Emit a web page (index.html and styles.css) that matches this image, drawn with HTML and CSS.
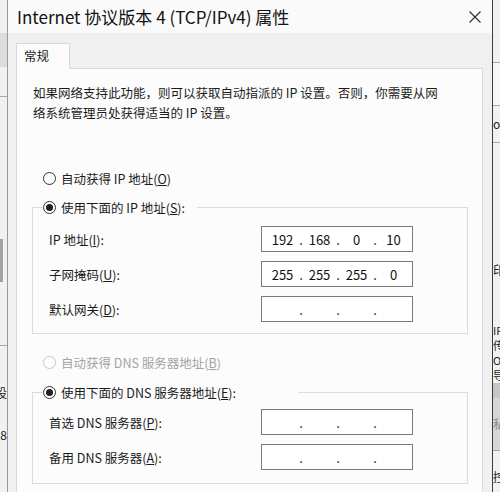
FILE: index.html
```html
<!DOCTYPE html>
<html lang="zh-CN">
<head>
    <meta charset="UTF-8">
    <meta name="viewport" content="width=device-width, initial-scale=1.0">
    <title>Internet 协议版本 4 (TCP/IPv4) 属性</title>
    <link rel="stylesheet" href="styles.css">
</head>
<body>
<div class="screen">
    <!-- window behind the dialog, left edge -->
    <div class="bg-left">
        <div class="seg" style="height:33px"></div>
        <div class="seg dark" style="height:34px"></div>
        <div class="seg line" style="height:30px"></div>
        <div class="seg" style="height:142px"></div>
        <div class="seg bar" style="height:43px"></div>
        <div class="seg line" style="height:64px"></div>
        <div class="seg" style="height:37px"></div>
        <div class="frag end">设</div>
        <div class="seg" style="height:22px"></div>
        <div class="frag end">,8</div>
    </div>

    <div class="dialog">
        <div class="titlebar">
            <span class="title">Internet 协议版本 4 (TCP/IPv4) 属性</span>
            <svg class="close" viewBox="0 0 12 12">
                <path d="M0.5 0.5 L11.5 11.5 M11.5 0.5 L0.5 11.5" stroke="#2b2b2b" stroke-width="1.1" fill="none"/>
            </svg>
        </div>
        <div class="tabstrip">
            <div class="tab">常规</div>
        </div>
        <div class="panel">
            <p class="intro">如果网络支持此功能，则可以获取自动指派的 IP 设置。否则，你需要从网<br>络系统管理员处获得适当的 IP 设置。</p>

            <div class="radio-row first"><span class="radio"></span><span>自动获得 IP 地址(<u>O</u>)</span></div>

            <fieldset class="group ip-group">
                <legend class="radio-row"><span class="radio checked"></span><span>使用下面的 IP 地址(<u>S</u>):</span></legend>
                <div class="field">
                    <span class="field-label">IP 地址(<u>I</u>):</span>
                    <div class="ip-box"><span class="octet">192</span><span class="dot">.</span><span class="octet">168</span><span class="dot">.</span><span class="octet">0</span><span class="dot">.</span><span class="octet">10</span></div>
                </div>
                <div class="field">
                    <span class="field-label">子网掩码(<u>U</u>):</span>
                    <div class="ip-box"><span class="octet">255</span><span class="dot">.</span><span class="octet">255</span><span class="dot">.</span><span class="octet">255</span><span class="dot">.</span><span class="octet">0</span></div>
                </div>
                <div class="field">
                    <span class="field-label">默认网关(<u>D</u>):</span>
                    <div class="ip-box"><span class="octet"></span><span class="dot">.</span><span class="octet"></span><span class="dot">.</span><span class="octet"></span><span class="dot">.</span><span class="octet"></span></div>
                </div>
            </fieldset>

            <div class="radio-row disabled"><span class="radio"></span><span>自动获得 DNS 服务器地址(<u>B</u>)</span></div>

            <fieldset class="group dns-group">
                <legend class="radio-row"><span class="radio checked"></span><span>使用下面的 DNS 服务器地址(<u>E</u>):</span></legend>
                <div class="field">
                    <span class="field-label">首选 DNS 服务器(<u>P</u>):</span>
                    <div class="ip-box"><span class="octet"></span><span class="dot">.</span><span class="octet"></span><span class="dot">.</span><span class="octet"></span><span class="dot">.</span><span class="octet"></span></div>
                </div>
                <div class="field">
                    <span class="field-label">备用 DNS 服务器(<u>A</u>):</span>
                    <div class="ip-box"><span class="octet"></span><span class="dot">.</span><span class="octet"></span><span class="dot">.</span><span class="octet"></span><span class="dot">.</span><span class="octet"></span></div>
                </div>
            </fieldset>
        </div>
    </div>

    <!-- window behind the dialog, right edge -->
    <div class="bg-right">
        <div class="seg line" style="height:63px"></div>
        <div class="seg line light" style="height:43px"></div>
        <div class="frag line" style="height:37px">oı</div>
        <div class="seg" style="height:117px"></div>
        <div class="frag">印</div>
        <div class="seg" style="height:43px"></div>
        <div class="frag tight">IP</div>
        <div class="frag tight">传</div>
        <div class="frag tight">OC</div>
        <div class="frag tight">导</div>
        <div class="seg grey" style="height:15px"></div>
        <div class="frag pale line" style="height:53px">私(</div>
        <div class="seg" style="height:16px"></div>
        <div class="frag">控</div>
    </div>
</div>
</body>
</html>
```

FILE: styles.css
```css
body {
    margin: 0;
    font-family: "Noto Sans CJK SC", "Noto Sans", sans-serif;
    font-size: 12.5px;
    color: #1b1b1b;
}
.screen {
    display: flex;
    width: 500px;
    height: 492px;
    overflow: hidden;
    background: #efefef;
}

/* background window strips */
.bg-left, .bg-right {
    width: 7px;
    flex: none;
    overflow: hidden;
    background: #f1f1f1;
}
.seg {
    box-sizing: border-box;
}
.seg.dark {
    background: #dcdcdc;
}
.seg.line, .frag.line {
    border-bottom: 1px solid #a8a8a8;
}
.seg.light {
    background: #f7f7f7;
}
.seg.bar {
    border-left: 3px solid #a2a2a2;
}
.seg.grey {
    background: #c6c6c6;
}
.frag {
    display: flex;
    align-items: center;
    height: 20px;
    font-size: 12px;
    line-height: 14px;
    color: #222;
    white-space: nowrap;
    overflow: hidden;
    box-sizing: border-box;
}
.frag.end {
    justify-content: flex-end;
}
.frag.tight {
    height: 15px;
    font-size: 11px;
    line-height: 13px;
}
.frag.pale {
    background: #d6d6d6;
    color: #8a8a8a;
}

/* dialog */
.dialog {
    width: 484px;
    flex: none;
    display: flex;
    flex-direction: column;
    border-left: 1px solid #9a9a9a;
    border-right: 1px solid #3c3c3c;
    background: #f0f0f0;
}
.titlebar {
    height: 33px;
    flex: none;
    display: flex;
    align-items: center;
    justify-content: space-between;
    padding: 0 11px 0 9px;
    background: #fafafa;
}
.title {
    font-size: 17px;
    color: #111;
    white-space: nowrap;
}
.close {
    width: 12px;
    height: 12px;
}
.tabstrip {
    flex: none;
    padding: 10px 0 0 8px;
}
.tab {
    width: 54px;
    height: 26px;
    box-sizing: border-box;
    padding-left: 7px;
    line-height: 24px;
    border: 1px solid #d9d9d9;
    border-bottom: none;
    background: #fcfcfc;
    margin-bottom: -1px;
    position: relative;
    z-index: 1;
}
.panel {
    flex: 1;
    margin: 0 9px 0 8px;
    padding: 0 14px 0 15px;
    border: 1px solid #d9d9d9;
    border-bottom: none;
    background: #fcfcfc;
}
.intro {
    margin: 14px 0 0 1px;
    line-height: 19.5px;
    white-space: nowrap;
}

/* radio buttons */
.radio-row {
    display: flex;
    align-items: center;
    gap: 5px;
    height: 20px;
    margin-left: 11px;
    white-space: nowrap;
}
.radio-row.first {
    margin-top: 46px;
}
.radio-row.disabled {
    margin-top: 18px;
    color: #a3a3a3;
}
.radio {
    width: 13px;
    height: 13px;
    box-sizing: border-box;
    border: 1px solid #333;
    border-radius: 50%;
    background: #fff;
    display: flex;
    align-items: center;
    justify-content: center;
}
.disabled .radio {
    border-color: #c4c4c4;
}
.radio.checked::after {
    content: "";
    width: 7px;
    height: 7px;
    border-radius: 50%;
    background: #1f1f1f;
}

/* group boxes */
.group {
    margin: 9px 0 0;
    padding: 0 0 11px 10px;
    border: 1px solid #dcdcdc;
    min-width: 0;
}
.group legend {
    padding: 0;
    margin-left: 0;
}
.ip-group legend {
    padding-right: 12px;
}
.dns-group {
    margin-top: 10px;
    padding-bottom: 13px;
}
.dns-group legend {
    padding-right: 62px;
}
.field {
    display: flex;
    align-items: center;
    margin: 9px 0 0 6px;
}
.dns-group .field:first-of-type {
    margin-top: 7px;
}
.field-label {
    width: 212px;
    flex: none;
    white-space: nowrap;
}
.ip-box {
    width: 152px;
    height: 26px;
    box-sizing: border-box;
    display: flex;
    align-items: center;
    padding-left: 4px;
    border: 1px solid #7a7a7a;
    background: #fff;
    font-size: 13px;
    color: #111;
}
.octet {
    width: 33px;
    text-align: center;
}
.dot {
    width: 4px;
    text-align: center;
}
```
